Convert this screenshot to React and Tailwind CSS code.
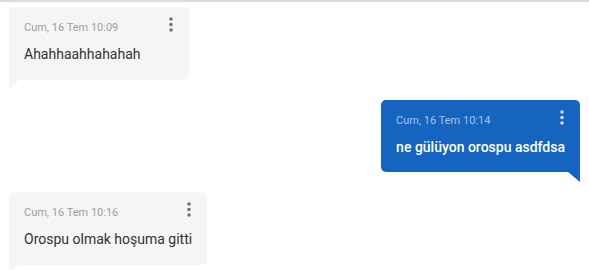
import React from "react"

const messages = [
  { id: 1, time: "Cum, 16 Tem 10:09", text: "Ahahhaahhahahah", mine: false },
  { id: 2, time: "Cum, 16 Tem 10:14", text: "ne gülüyon orospu asdfdsa", mine: true },
  { id: 3, time: "Cum, 16 Tem 10:16", text: "Orospu olmak hoşuma gitti", mine: false },
]

function Kebab({ className }) {
  return (
    <svg width="4" height="15" viewBox="0 0 4 15" className={className}>
      <circle cx="2" cy="2" r="1.8" fill="currentColor" />
      <circle cx="2" cy="7.5" r="1.8" fill="currentColor" />
      <circle cx="2" cy="13" r="1.8" fill="currentColor" />
    </svg>
  )
}

function Bubble({ time, text, mine }) {
  return (
    <div className={mine ? "flex justify-end" : "flex justify-start"}>
      <div
        className={
          mine
            ? "relative min-w-[180px] rounded-[5px] rounded-br-none bg-[#1565c0] pl-[15px] pr-[15px] pt-[14px] pb-[15px]"
            : "relative min-w-[180px] rounded-[5px] rounded-bl-none bg-[#f5f5f5] pl-[15px] pr-[15px] pt-[14px] pb-[16px]"
        }
      >
        <div className={mine ? "text-[11px] leading-[13px] text-[#a3c2e8]" : "text-[11px] leading-[13px] text-[#9e9e9e]"}>
          {time}
        </div>
        <div
          className={
            mine
              ? "mt-[10px] text-[14px] leading-[20px] font-medium text-white whitespace-nowrap"
              : "mt-[10px] text-[14px] leading-[20px] text-[#333] whitespace-nowrap"
          }
        >
          {text}
        </div>
        <Kebab
          className={
            mine
              ? "absolute right-[16px] top-[10px] text-[#c9dcf3]"
              : "absolute right-[16px] top-[10px] text-[#757575]"
          }
        />
        {/* tail */}
        {mine ? (
          <svg width="12" height="10" viewBox="0 0 12 10" className="absolute right-0 top-full">
            <polygon points="0,0 12,0 12,10" fill="#1565c0" />
          </svg>
        ) : (
          <svg width="10" height="9" viewBox="0 0 10 9" className="absolute left-0 top-full">
            <polygon points="0,0 10,0 0,9" fill="#f5f5f5" />
          </svg>
        )}
      </div>
    </div>
  )
}

export default function App() {
  return (
    <div
      className="w-[589px] h-[270px] overflow-hidden bg-white border-t-2 border-[#dcdcdc]"
      style={{ fontFamily: "Roboto, 'Liberation Sans', sans-serif" }}
    >
      <div className="flex flex-col gap-[20px] px-[9px] pt-[5px]">
        {messages.map((m) => (
          <Bubble key={m.id} {...m} />
        ))}
      </div>
    </div>
  )
}
